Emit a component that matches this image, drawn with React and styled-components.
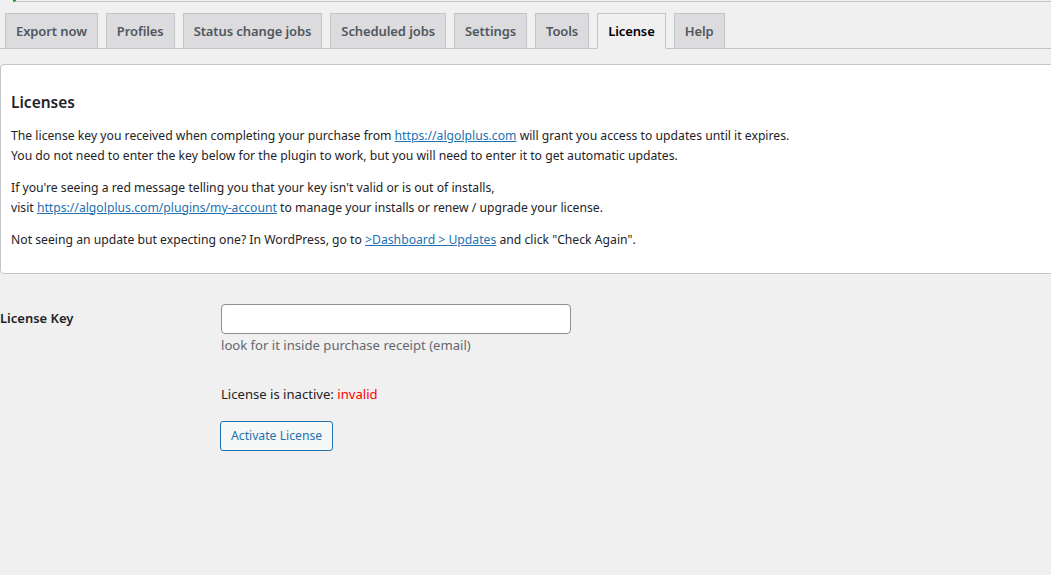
import React, { useState } from 'react';
import styled, { createGlobalStyle } from 'styled-components';

const GlobalStyle = createGlobalStyle`
  html, body {
    margin: 0;
    padding: 0;
    background: #f0f0f1;
    overflow: hidden;
  }
  body {
    font-family: "Noto Sans", "Open Sans", sans-serif;
    font-size: 12.2px;
    line-height: 1.4;
    color: #3c434a;
  }
`;

const Page = styled.div`
  min-height: 575px;
`;

const NoticeEdge = styled.div`
  margin-left: 13px;
  height: 1px;
  border-left: 3px solid #00a32a;
  border-bottom: 1px solid #c3c4c7;
`;

const TabBar = styled.nav`
  display: flex;
  gap: 8px;
  margin-top: 11px;
  padding-left: 5px;
  border-bottom: 1px solid #c3c4c7;
`;

const Tab = styled.a`
  display: block;
  margin-bottom: -1px;
  padding: 5px 10px;
  border: 1px solid #c3c4c7;
  border-bottom-color: ${(p) => (p.$active ? '#f0f0f1' : '#c3c4c7')};
  background: ${(p) => (p.$active ? '#f0f0f1' : '#dcdcde')};
  color: ${(p) => (p.$active ? '#000' : '#50575e')};
  font-size: 13px;
  font-weight: 600;
  line-height: 24px;
  letter-spacing: -0.1px;
  text-decoration: none;
  white-space: nowrap;
  cursor: pointer;
`;

const Card = styled.section`
  margin: 15px -10px 0 0;
  padding: 25px 10px 10px;
  background: #fff;
  border: 1px solid #c3c4c7;
  border-radius: 4px;
  color: #1d2327;
`;

const Heading = styled.h2`
  margin: 0 0 12px;
  font-size: 15.5px;
  font-weight: 600;
  line-height: 24px;
  color: #1d2327;
`;

const Para = styled.p`
  margin: 0 0 13px;
  font-size: 12.2px;
  line-height: 19.5px;
`;

const TextLink = styled.a`
  color: #2271b1;
  text-decoration: underline;
`;

const FormGrid = styled.div`
  display: grid;
  grid-template-columns: 220px 1fr;
  margin-top: 15px;
`;

const Label = styled.label`
  padding-top: 20px;
  font-size: 13px;
  font-weight: 600;
  line-height: 19px;
  color: #1d2327;
`;

const Field = styled.div`
  padding-top: 15px;
  display: flex;
  flex-direction: column;
  align-items: flex-start;
`;

const KeyInput = styled.input`
  box-sizing: border-box;
  width: 350px;
  height: 30px;
  margin: 0 0 0 1px;
  padding: 0 8px;
  border: 1px solid #8c8f94;
  border-radius: 4px;
  background: #fff;
  font: inherit;
  font-size: 13px;
  color: #2c3338;
  outline: none;
`;

const Hint = styled.p`
  margin: 1px 0 0 1px;
  font-size: 13.1px;
  line-height: 20px;
  color: #646970;
`;

const Status = styled.p`
  margin: 29px 0 0 1px;
  font-size: 13.1px;
  line-height: 20px;
  color: #1d2327;
`;

const Invalid = styled.span`
  color: #ff0000;
`;

const ActivateButton = styled.button`
  box-sizing: border-box;
  margin-top: 17px;
  height: 30px;
  padding: 0 10px;
  border: 1px solid #2271b1;
  border-radius: 3px;
  background: #f6f7f7;
  color: #2271b1;
  font: inherit;
  font-size: 12.2px;
  line-height: 28px;
  cursor: pointer;
`;

const tabs = [
  'Export now',
  'Profiles',
  'Status change jobs',
  'Scheduled jobs',
  'Settings',
  'Tools',
  'License',
  'Help',
];

export default function App() {
  const [key, setKey] = useState('');

  return (
    <Page>
      <GlobalStyle />
      <NoticeEdge />
      <TabBar>
        {tabs.map((t) => (
          <Tab key={t} $active={t === 'License'}>
            {t}
          </Tab>
        ))}
      </TabBar>

      <Card>
        <Heading>Licenses</Heading>
        <Para>
          The license key you received when completing your purchase from{' '}
          <TextLink href="#">https://algolplus.com</TextLink> will grant you access to updates until it
          expires.
          <br />
          You do not need to enter the key below for the plugin to work, but you will need to enter it to
          get automatic updates.
        </Para>
        <Para>
          If you're seeing a red message telling you that your key isn't valid or is out of installs,
          <br />
          visit <TextLink href="#">https://algolplus.com/plugins/my-account</TextLink> to manage your
          installs or renew / upgrade your license.
        </Para>
        <Para>
          Not seeing an update but expecting one? In WordPress, go to{' '}
          <TextLink href="#">&gt;Dashboard &gt; Updates</TextLink> and click "Check Again".
        </Para>
      </Card>

      <FormGrid>
        <Label htmlFor="license-key">License Key</Label>
        <Field>
          <KeyInput id="license-key" type="text" value={key} onChange={(e) => setKey(e.target.value)} />
          <Hint>look for it inside purchase receipt (email)</Hint>
          <Status>
            License is inactive: <Invalid>invalid</Invalid>
          </Status>
          <ActivateButton type="button">Activate License</ActivateButton>
        </Field>
      </FormGrid>
    </Page>
  );
}
